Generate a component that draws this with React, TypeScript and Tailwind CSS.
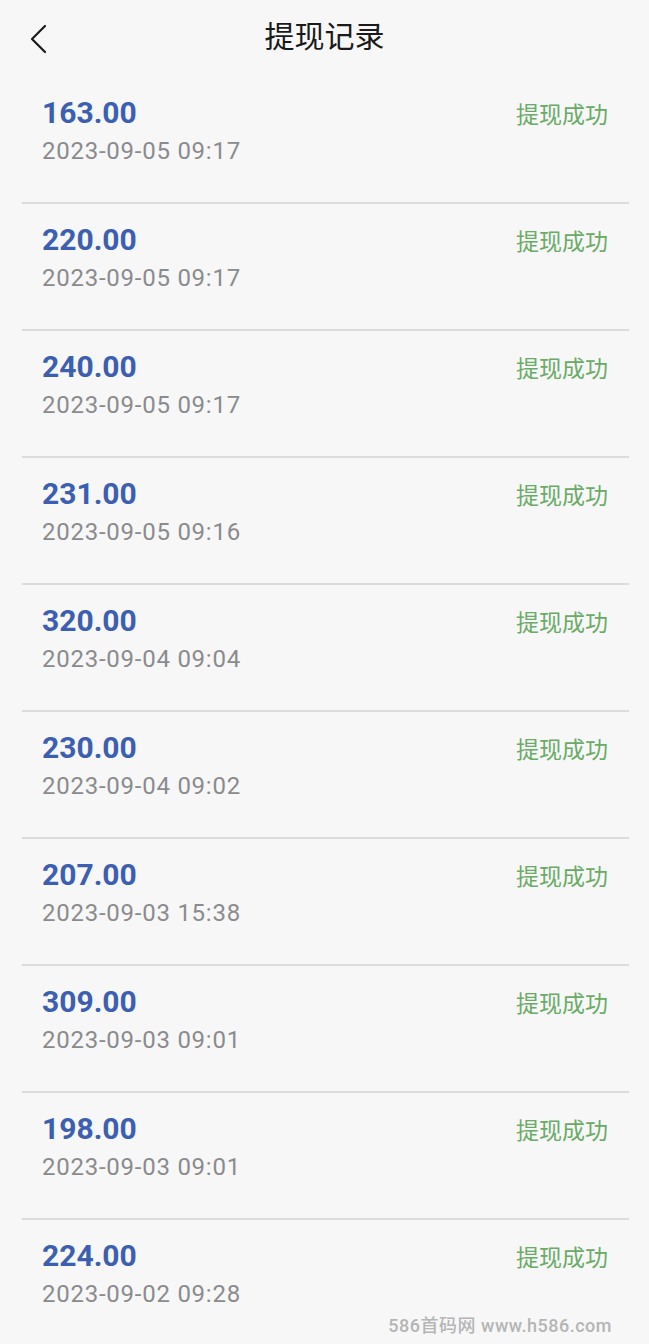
import React from "react";

const records = [
  { amount: "163.00", time: "2023-09-05 09:17" },
  { amount: "220.00", time: "2023-09-05 09:17" },
  { amount: "240.00", time: "2023-09-05 09:17" },
  { amount: "231.00", time: "2023-09-05 09:16" },
  { amount: "320.00", time: "2023-09-04 09:04" },
  { amount: "230.00", time: "2023-09-04 09:02" },
  { amount: "207.00", time: "2023-09-03 15:38" },
  { amount: "309.00", time: "2023-09-03 09:01" },
  { amount: "198.00", time: "2023-09-03 09:01" },
  { amount: "224.00", time: "2023-09-02 09:28" },
];

export default function App() {
  return (
    <div
      className="relative min-h-[1344px] w-[649px] overflow-hidden bg-[#f7f7f8]"
      style={{ fontFamily: 'Roboto, "Noto Sans CJK SC", sans-serif' }}
    >
      {/* 顶部导航 */}
      <div className="relative flex h-[77px] items-center justify-center">
        <button type="button" aria-label="返回" className="absolute left-[28px] top-[24px]">
          <svg width="20" height="30" viewBox="0 0 20 30" fill="none">
            <polyline
              points="17,2 4,15 17,28"
              stroke="#1a1a1a"
              strokeWidth="2.2"
              strokeLinecap="round"
              strokeLinejoin="round"
            />
          </svg>
        </button>
        <h1 className="-mt-[4px] text-[30px] leading-none text-[#1a1a1a]">提现记录</h1>
      </div>

      <div className="pl-[22px] pr-[20px]">
        {records.map((r, i) => (
          <div
            key={i}
            className="flex h-[127px] items-start justify-between border-b-2 border-[#dcdcdc] pl-[20px] pr-[21px] pt-[20px]"
          >
            <div>
              <p className="text-[30px] font-bold leading-[32px] text-[#3c5fb1]">{r.amount}</p>
              <p className="mt-[7px] text-[24px] leading-[30px] tracking-[0.75px] text-[#8b8b8d]">
                {r.time}
              </p>
            </div>
            <p className="mt-[3px] text-[23px] leading-[32px] text-[#6aab66]">提现成功</p>
          </div>
        ))}
      </div>

      {/* 水印 */}
      <p className="absolute bottom-[8px] right-[37px] text-[18px] font-medium tracking-[0.5px] text-[#b5b5b5]">
        586首码网 www.h586.com
      </p>
    </div>
  );
}
